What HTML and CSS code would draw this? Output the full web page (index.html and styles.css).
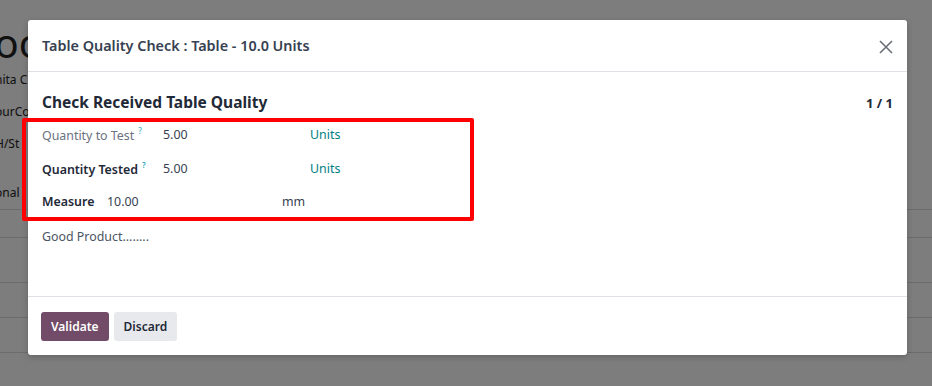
FILE: index.html
```html
<!DOCTYPE html>
<html lang="en">
<head>
    <meta charset="UTF-8">
    <title>Table Quality Check</title>
    <link rel="stylesheet" href="styles.css">
</head>
<body>
    <!--the form behind the dialog-->
    <div class="page">
        <div class="page-sheet">
            <div class="page-title">Too</div>
            <div class="page-line">nita C</div>
            <div class="page-line">ourCo</div>
            <div class="page-line">H/St</div>
            <div class="page-line tab">onal</div>
        </div>
        <div class="page-rows">
            <div class="page-row"></div>
            <div class="page-row"></div>
            <div class="page-row"></div>
            <div class="page-row"></div>
            <div class="page-row"></div>
        </div>
    </div>

    <!--dim layer and dialog-->
    <div class="backdrop">
        <div class="modal">
            <header class="modal-header">
                <h4>Table Quality Check : Table - 10.0 Units</h4>
                <button class="close-btn" aria-label="Close">
                    <svg width="14" height="14" viewBox="0 0 14 14"><path d="M1 1L13 13M13 1L1 13" stroke="#6b6f76" stroke-width="1.6" fill="none"/></svg>
                </button>
            </header>

            <div class="modal-body">
                <div class="check-head">
                    <h3>Check Received Table Quality</h3>
                    <span class="pager">1 / 1</span>
                </div>

                <div class="fields">
                    <div class="field-row">
                        <label class="field-label muted">Quantity to Test<sup>?</sup></label>
                        <span class="field-value">5.00</span>
                        <span class="field-uom">Units</span>
                    </div>
                    <div class="field-row">
                        <label class="field-label">Quantity Tested<sup>?</sup></label>
                        <span class="field-value">5.00</span>
                        <span class="field-uom">Units</span>
                    </div>
                    <div class="measure-row">
                        <label class="field-label">Measure</label>
                        <span class="measure-value">10.00</span>
                        <span class="measure-uom">mm</span>
                    </div>
                </div>

                <p class="note">Good Product........</p>

                <!--highlight drawn over the fields-->
                <div class="highlight"></div>
            </div>

            <footer class="modal-footer">
                <button class="btn btn-primary">Validate</button>
                <button class="btn btn-secondary">Discard</button>
            </footer>
        </div>
    </div>
</body>
</html>
```

FILE: styles.css
```css
/*base*/
body {
    margin: 0;
    width: 932px;
    height: 386px;
    overflow: hidden;
    font-family: "Noto Sans", "Open Sans", sans-serif;
    color: #374151;
    background-color: #f6f6f6;
}

/*page behind the dialog*/
.page {
    height: 386px;
    display: flex;
    flex-direction: column;
    background-color: #fafafa;
}

.page-sheet {
    padding-top: 20px;
    height: 187px;
    box-sizing: border-box;
    color: #222;
}

.page-title {
    margin-left: -25px;
    font-size: 40px;
    line-height: 46px;
    height: 44px;
}

.page-line {
    margin-left: -5px;
    font-size: 12px;
    line-height: 32px;
}

.page-line.tab {
    margin-top: 17px;
}

.page-rows {
    display: flex;
    flex-direction: column;
    margin-top: 22px;
}

.page-row {
    border-top: 1px solid #d8d8d8;
    height: 27px;
}

.page-row:nth-child(2) {
    height: 44px;
}

.page-row:nth-child(3),
.page-row:nth-child(4) {
    height: 34px;
}

/*dim layer*/
.backdrop {
    position: absolute;
    top: 0;
    left: 0;
    width: 932px;
    height: 386px;
    background-color: rgba(0, 0, 0, 0.5);
    padding: 20px 0 0 28px;
    box-sizing: border-box;
}

.modal {
    position: relative;
    width: 879px;
    background-color: #ffffff;
    border-radius: 3px;
    box-shadow: 0 2px 6px rgba(0, 0, 0, 0.2);
}

.modal-header {
    height: 52px;
    box-sizing: border-box;
    padding: 0 13px 0 14px;
    display: flex;
    align-items: center;
    justify-content: space-between;
    border-bottom: 1px solid #dee2e6;
}

.modal-header h4 {
    margin: 0;
    font-size: 14.4px;
    font-weight: 600;
    color: #374151;
}

.close-btn {
    border: none;
    background: none;
    padding: 0;
    width: 16px;
    height: 16px;
    display: flex;
    align-items: center;
    justify-content: center;
    margin-top: 2px;
}

.modal-body {
    position: relative;
    height: 224px;
    box-sizing: border-box;
    padding: 19px 14px 0 14px;
}

.check-head {
    display: flex;
    justify-content: space-between;
    align-items: center;
}

.check-head h3 {
    margin: 0;
    font-size: 15.5px;
    font-weight: 700;
    color: #1f2937;
    line-height: 23px;
}

.pager {
    font-size: 13px;
    font-weight: 700;
    color: #1f2937;
}

.fields {
    margin-top: 10px;
    display: flex;
    flex-direction: column;
    gap: 12.5px;
}

.field-row,
.measure-row {
    display: flex;
    align-items: center;
    height: 21px;
    font-size: 12.4px;
}

.field-label {
    font-weight: 600;
    color: #1f2937;
}

.field-label.muted {
    font-weight: 400;
    color: #6b7280;
}

.field-row .field-label {
    width: 121px;
}

.field-label sup {
    color: #1ea3b8;
    font-size: 8px;
    margin-left: 4px;
    vertical-align: 6px;
}

.field-value {
    width: 147px;
}

.field-uom {
    color: #017e84;
}

.measure-row .field-label {
    width: 65px;
}

.measure-value {
    width: 175px;
}

.note {
    margin: 16px 0 0;
    font-size: 12.4px;
    color: #4b5563;
}

/*red annotation box*/
.highlight {
    position: absolute;
    left: -6px;
    top: 46px;
    width: 444px;
    height: 95px;
    border: 4px solid #ff0000;
    border-radius: 2px;
}

.modal-footer {
    height: 59px;
    box-sizing: border-box;
    border-top: 1px solid #dee2e6;
    padding: 15px 13px;
    display: flex;
    gap: 5px;
}

.btn {
    height: 29px;
    border: none;
    border-radius: 3px;
    padding: 0 10px;
    font-family: "Noto Sans", "Open Sans", sans-serif;
    font-size: 12px;
    font-weight: 600;
}

.btn-primary {
    background-color: #714b67;
    color: #ffffff;
}

.btn-secondary {
    background-color: #e7e9ed;
    color: #1f2937;
}
```
